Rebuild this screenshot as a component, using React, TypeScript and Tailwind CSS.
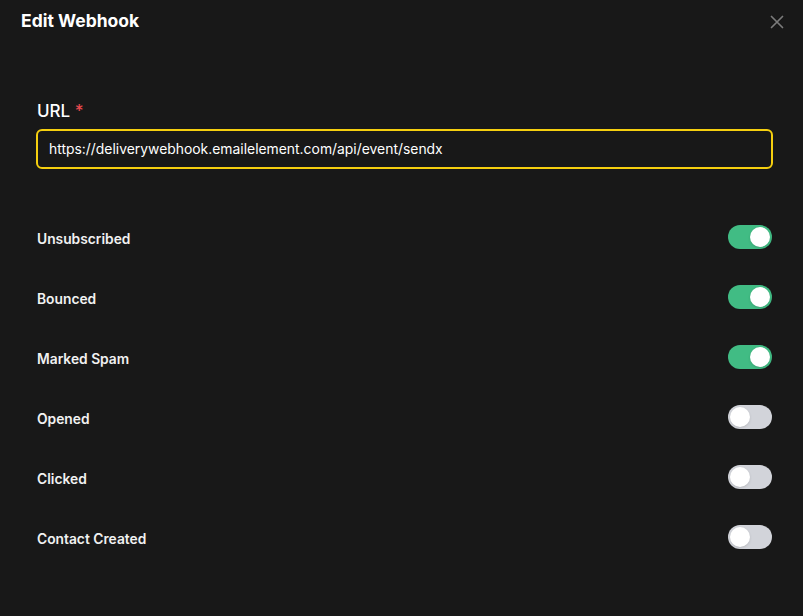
import React, { useState } from 'react';

const events = ['Unsubscribed', 'Bounced', 'Marked Spam', 'Opened', 'Clicked', 'Contact Created'];

interface ToggleProps {
  checked: boolean;
  onChange: () => void;
}

const Toggle: React.FC<ToggleProps> = ({ checked, onChange }) => (
  <button
    type="button"
    onClick={onChange}
    className={`flex h-[24px] w-[44px] items-center rounded-full px-[2px] ${checked ? 'justify-end bg-[#41bc84]' : 'justify-start bg-[#d2d4da]'}`}
  >
    <span className="block h-[20px] w-[20px] rounded-full bg-white shadow" />
  </button>
);

const App: React.FC = () => {
  const [enabled, setEnabled] = useState<Record<string, boolean>>({
    Unsubscribed: true,
    Bounced: true,
    'Marked Spam': true,
    Opened: false,
    Clicked: false,
    'Contact Created': false,
  });
  const [url, setUrl] = useState('https://deliverywebhook.emailelement.com/api/event/sendx');

  return (
    <div className="h-[616px] w-[803px] bg-[#181818] font-['Inter',sans-serif] text-white">
      <div className="flex items-center justify-between pl-[21px] pr-[19px] pt-[9px]">
        <h2 className="text-[17.5px] font-bold leading-[24px]">Edit Webhook</h2>
        <svg width="14" height="14" viewBox="0 0 14 14" className="mt-[2px] text-[#7b7b7b]">
          <path d="M1.5 1.5l11 11M12.5 1.5l-11 11" stroke="currentColor" strokeWidth="1.7" strokeLinecap="round" />
        </svg>
      </div>

      <div className="pl-[36px] pr-[30px] pt-[66px]">
        <label className="block pl-[1px] text-[17px] font-medium leading-[24px]">
          URL <span className="text-[#e5484d]">*</span>
        </label>
        <input
          value={url}
          onChange={(e) => setUrl(e.target.value)}
          className="mt-[6px] h-[40px] w-full rounded-[6px] border-2 border-[#f5cf0f] bg-transparent px-[11px] text-[13.9px] text-white outline-none"
        />

        <div className="mt-[38px] flex flex-col">
          {events.map((name) => (
            <div key={name} className="flex h-[60px] items-center justify-between pl-[1px] pr-[1px]">
              <span className="pt-[4px] text-[13.8px] font-semibold text-[#f1f1f1]">{name}</span>
              <Toggle
                checked={enabled[name]}
                onChange={() => setEnabled((s) => ({ ...s, [name]: !s[name] }))}
              />
            </div>
          ))}
        </div>
      </div>
    </div>
  );
};

export default App;
